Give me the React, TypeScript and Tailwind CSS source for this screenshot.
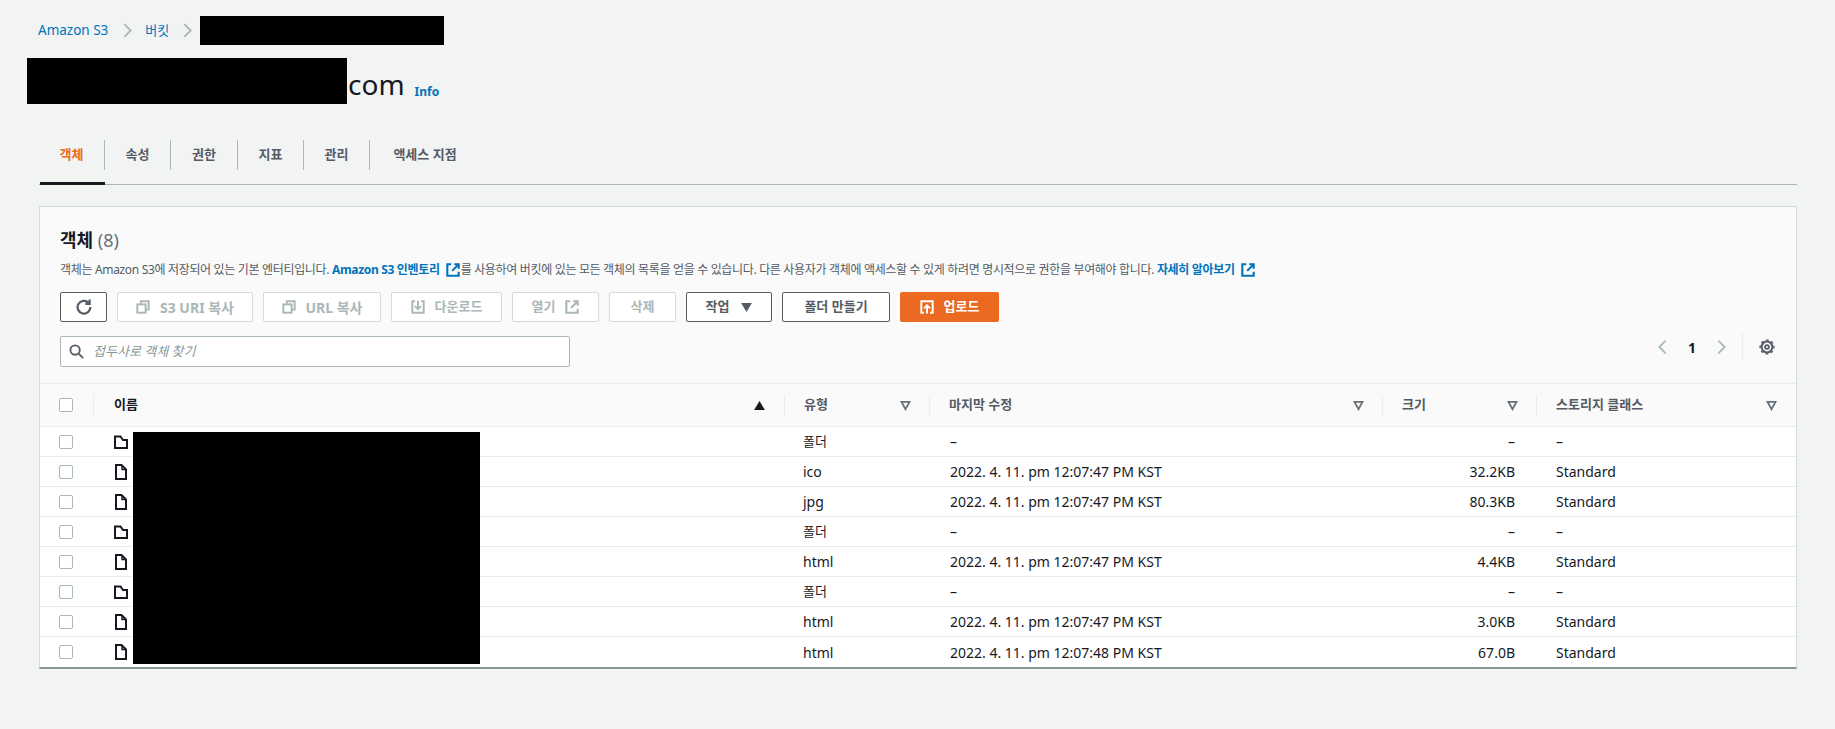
import React from 'react'

const FONT = "font-['Noto_Sans','Noto_Sans_CJK_KR',sans-serif]"

function ExternalIcon({ className = '' }: { className?: string }) {
  return (
    <svg viewBox="0 0 16 16" className={className} fill="none" stroke="currentColor" strokeWidth="2.4">
      <path d="M6 1.5H1.5v13h13V10" />
      <path d="M9.5 1.5h5V6.5" />
      <path d="M14.5 1.5 7 9" />
    </svg>
  )
}

function CopyIcon() {
  return (
    <svg viewBox="0 0 16 16" className="w-[14px] h-[14px]" fill="none" stroke="currentColor" strokeWidth="2.2">
      <path d="M5.5 5V1.5h9V11H11" />
      <rect x="1.5" y="5" width="9.5" height="9.5" />
    </svg>
  )
}

function DownloadIcon() {
  return (
    <svg viewBox="0 0 16 16" className="w-[14px] h-[14px]" fill="none" stroke="currentColor" strokeWidth="2.2">
      <path d="M4.5 1.5h-3v13h13v-13h-3" />
      <path d="M8 1v9" />
      <path d="M4.5 7 8 10.5 11.5 7" />
    </svg>
  )
}

function UploadIcon() {
  return (
    <svg viewBox="0 0 16 16" className="w-[14px] h-[14px]" fill="none" stroke="currentColor" strokeWidth="2.2">
      <path d="M4.5 14.5h-3v-13h13v13h-3" />
      <path d="M8 15.5V6" />
      <path d="M4.5 9.5 8 6l3.5 3.5" />
    </svg>
  )
}

function RefreshIcon() {
  return (
    <svg viewBox="0 0 16 16" className="w-4 h-4" fill="none" stroke="currentColor" strokeWidth="2.2">
      <path d="M12.6 3.8A6.4 6.4 0 1 0 14.4 8" />
      <path d="M13.6 0.5v4.3H9.3" />
    </svg>
  )
}

function FolderIcon() {
  return (
    <svg viewBox="0 0 14 14" className="w-[14px] h-[14px] text-[#16191f]" fill="none" stroke="currentColor" strokeWidth="2">
      <path d="M1 13V1.5h5.5L9 5h4v8Z" />
    </svg>
  )
}

function FileIcon() {
  return (
    <svg viewBox="0 0 14 16" className="w-[14px] h-4 text-[#16191f]" fill="none" stroke="currentColor" strokeWidth="2">
      <path d="M2 15V1h5.5L12 5.5V15Z" />
      <path d="M8 1v4.5h4" strokeWidth="1.4" />
    </svg>
  )
}

function SortIcon() {
  return (
    <svg viewBox="0 0 12 12" className="w-[11px] h-[11px] text-[#687078]" fill="none" stroke="currentColor" strokeWidth="2">
      <path d="M1.6 2h8.8L6 10Z" />
    </svg>
  )
}

function Chevron({ dir, className = '' }: { dir: 'left' | 'right'; className?: string }) {
  return (
    <svg viewBox="0 0 10 16" className={className} fill="none" stroke="currentColor" strokeWidth="2">
      <path d={dir === 'right' ? 'M1.5 1 8.5 8l-7 7' : 'M8.5 1 1.5 8l7 7'} />
    </svg>
  )
}

function GearIcon() {
  return (
    <svg viewBox="0 0 16 16" className="w-4 h-4 text-[#545b64]" fill="none" stroke="currentColor">
      <circle cx="8" cy="8" r="5.4" strokeWidth="2" />
      <circle cx="8" cy="8" r="6.9" strokeWidth="1.4" strokeDasharray="2.8 2.62" strokeDashoffset="1.4" />
      <circle cx="8" cy="8" r="1.9" strokeWidth="1.8" />
    </svg>
  )
}

function DisabledButton({ width, children }: { width: string; children: React.ReactNode }) {
  return (
    <div className={`${width} h-[30px] flex items-center justify-center gap-[10px] border border-[#d5dbdb] rounded-[2px] bg-white text-[#aab7b8] text-[13px] font-bold`}>
      {children}
    </div>
  )
}

function Checkbox() {
  return <div className="w-[14px] h-[14px] border border-[#aab7b8] rounded-[2px] bg-white" />
}

const TABS = [
  { label: '객체', width: 'w-[66px]' },
  { label: '속성', width: 'w-[66px]' },
  { label: '권한', width: 'w-[67px]' },
  { label: '지표', width: 'w-[66px]' },
  { label: '관리', width: 'w-[66px]' },
  { label: '액세스 지점', width: 'w-[110px]' },
]
const COLS = 'grid grid-cols-[53px_691px_145px_453px_154px_1fr]'

const ROWS = [
  { folder: true, type: '폴더', date: '–', size: '–', cls: '–' },
  { folder: false, type: 'ico', date: '2022. 4. 11. pm 12:07:47 PM KST', size: '32.2KB', cls: 'Standard' },
  { folder: false, type: 'jpg', date: '2022. 4. 11. pm 12:07:47 PM KST', size: '80.3KB', cls: 'Standard' },
  { folder: true, type: '폴더', date: '–', size: '–', cls: '–' },
  { folder: false, type: 'html', date: '2022. 4. 11. pm 12:07:47 PM KST', size: '4.4KB', cls: 'Standard' },
  { folder: true, type: '폴더', date: '–', size: '–', cls: '–' },
  { folder: false, type: 'html', date: '2022. 4. 11. pm 12:07:47 PM KST', size: '3.0KB', cls: 'Standard' },
  { folder: false, type: 'html', date: '2022. 4. 11. pm 12:07:48 PM KST', size: '67.0B', cls: 'Standard' },
]

function HeaderCell({ label, last = false }: { label: string; last?: boolean }) {
  return (
    <div className="h-full flex items-center">
      <div className={`flex-1 h-[21px] flex items-center justify-between pl-[19px] ${last ? 'pr-[19px]' : 'pr-[18px]'} border-l border-[#eaeded]`}>
        <span className="text-[13px] font-bold text-[#545b64]">{label}</span>
        <SortIcon />
      </div>
    </div>
  )
}

export default function App() {
  return (
    <div className={`${FONT} min-h-screen bg-[#f2f3f3] pt-[16px] pl-[39px] pr-[38px] text-[#16191f]`}>
      {/* 브레드크럼 */}
      <div className="flex items-center h-[29px] -ml-[1px] text-[#0073bb]">
        <span className="text-[13.5px]">Amazon S3</span>
        <Chevron dir="right" className="w-[9px] h-[15px] ml-[15px] mr-[13px] text-[#aab7b8]" />
        <span className="text-[13px]">버킷</span>
        <Chevron dir="right" className="w-[9px] h-[15px] ml-[14px] mr-[8px] text-[#aab7b8]" />
        <div className="w-[244px] h-[29px] bg-black" />
      </div>

      {/* 제목 */}
      <div className="flex items-end h-[46px] mt-[13px] -ml-[12px]">
        <div className="w-[320px] h-[46px] bg-black" />
        <span className="text-[28px] leading-[38px] ml-[1px] mb-[1px]">com</span>
        <span className="ml-[10px] mb-[3px] text-[12px] font-bold text-[#0073bb]">Info</span>
      </div>

      {/* 탭 */}
      <div className="flex h-[45px] mt-[36px] border-b border-[#aab7b8]">
        {TABS.map((tab, i) => (
          <div key={tab.label} className={`relative h-[44px] ${tab.width}`}>
            <div className={`h-[30px] flex items-center justify-center whitespace-nowrap text-[13px] font-bold ${i < TABS.length - 1 ? 'border-r border-[#aab7b8]' : ''} ${i === 0 ? 'text-[#eb6920]' : 'text-[#545b64]'}`}>
              {tab.label}
            </div>
            {i === 0 && <div className="absolute bottom-[-1px] left-[1px] right-0 h-[3px] bg-[#16191f]" />}
          </div>
        ))}
      </div>

      {/* 객체 카드 */}
      <div className="mt-[21px] bg-[#fafafa] border-l border-t border-r border-[#d5dbdb] border-b-2 border-b-[#879596]">
        <div className="pl-[20px] pr-[20px] h-[176px]">
          <div className="pt-[20px] text-[18px] leading-[26px] font-bold">
            객체 <span className="font-normal text-[#687078]">(8)</span>
          </div>
          <div className="mt-[8px] flex items-center h-[18px] text-[12px] tracking-[-0.33px] text-[#545b64] whitespace-nowrap">
            <span>객체는 Amazon S3에 저장되어 있는 기본 엔터티입니다.&nbsp;</span>
            <span className="font-bold text-[#0073bb]">Amazon S3 인벤토리</span>
            <ExternalIcon className="w-[14px] h-[14px] ml-[6px] mr-[1px] text-[#0073bb]" />
            <span>를 사용하여 버킷에 있는 모든 객체의 목록을 얻을 수 있습니다. 다른 사용자가 객체에 액세스할 수 있게 하려면 명시적으로 권한을 부여해야 합니다.&nbsp;</span>
            <span className="font-bold text-[#0073bb]">자세히 알아보기</span>
            <ExternalIcon className="w-[14px] h-[14px] ml-[6px] text-[#0073bb]" />
          </div>
          <div className="mt-[13px] flex gap-[10px]">
            <div className="w-[47px] h-[30px] flex items-center justify-center border border-[#545b64] rounded-[2px] bg-white text-[#545b64]">
              <RefreshIcon />
            </div>
            <DisabledButton width="w-[136px]"><CopyIcon /><span className="text-[14px]">S3 URI 복사</span></DisabledButton>
            <DisabledButton width="w-[118px]"><CopyIcon /><span className="text-[14px]">URL 복사</span></DisabledButton>
            <DisabledButton width="w-[111px]"><DownloadIcon />다운로드</DisabledButton>
            <DisabledButton width="w-[87px]">열기<ExternalIcon className="w-[14px] h-[14px]" /></DisabledButton>
            <DisabledButton width="w-[67px]">삭제</DisabledButton>
            <div className="w-[86px] h-[30px] flex items-center justify-center gap-[12px] border border-[#545b64] rounded-[2px] bg-white text-[#545b64] text-[13px] font-bold">
              작업
              <svg viewBox="0 0 12 10" className="w-[11px] h-[9px]"><path d="M0 0h12L6 10Z" fill="currentColor" /></svg>
            </div>
            <div className="w-[108px] h-[30px] flex items-center justify-center border border-[#545b64] rounded-[2px] bg-white text-[#545b64] text-[13px] font-bold">
              폴더 만들기
            </div>
            <div className="w-[99px] h-[30px] flex items-center justify-center gap-[10px] rounded-[2px] bg-[#eb6920] text-white text-[13px] font-bold">
              <UploadIcon />업로드
            </div>
          </div>
          <div className="mt-[14px] flex items-start justify-between">
            <div className="w-[510px] h-[31px] flex items-center gap-[9px] pl-[8px] border border-[#aab7b8] rounded-[2px] bg-white">
              <svg viewBox="0 0 16 16" className="w-[15px] h-[15px] text-[#545b64]" fill="none" stroke="currentColor" strokeWidth="2">
                <circle cx="6.5" cy="6.5" r="5" />
                <path d="m10.5 10.5 4.5 4.5" />
              </svg>
              <span className="text-[13px] italic text-[#879596]">접두사로 객체 찾기</span>
            </div>
            <div className="flex items-center h-[30px] -mt-[4px] mr-[1px]">
              <Chevron dir="left" className="w-[9px] h-[16px] text-[#aab7b8]" />
              <span className="mx-[21px] text-[14px] font-bold">1</span>
              <Chevron dir="right" className="w-[9px] h-[16px] text-[#aab7b8]" />
              <div className="w-px h-[30px] bg-[#eaeded] ml-[16px] mr-[16px]" />
              <GearIcon />
            </div>
          </div>
        </div>

        {/* 테이블 헤더 */}
        <div className={`${COLS} h-[44px] bg-[#fafafa] border-t border-b border-[#eaeded]`}>
          <div className="h-full flex items-center pl-[19px]"><Checkbox /></div>
          <div className="h-full flex items-center">
            <div className="flex-1 h-[21px] flex items-center justify-between pl-[20px] pr-[19px] border-l border-[#eaeded]">
              <span className="text-[13px] font-bold text-[#16191f]">이름</span>
              <svg viewBox="0 0 12 10" className="w-[11px] h-[9px] text-[#16191f]"><path d="M6 0l6 10H0Z" fill="currentColor" /></svg>
            </div>
          </div>
          <HeaderCell label="유형" />
          <HeaderCell label="마지막 수정" />
          <HeaderCell label="크기" />
          <HeaderCell label="스토리지 클래스" last />
        </div>

        {/* 테이블 본문 */}
        <div className="relative bg-white">
          {ROWS.map((row, i) => (
            <div key={i} className={`${COLS} h-[30px] items-center text-[14px] ${i < ROWS.length - 1 ? 'border-b border-[#eaeded]' : ''}`}>
              <div className="pl-[19px]"><Checkbox /></div>
              <div className="pl-[21px]">{row.folder ? <FolderIcon /> : <FileIcon />}</div>
              <div className={`pl-[19px] ${row.folder ? 'text-[13px]' : ''}`}>{row.type}</div>
              <div className="pl-[21px]">{row.date}</div>
              <div className="pr-[21px] text-right">{row.size}</div>
              <div className="pl-[20px]">{row.cls}</div>
            </div>
          ))}
          {/* 가림 영역 */}
          <div className="absolute top-[5px] left-[93px] w-[347px] h-[232px] bg-black" />
        </div>
      </div>
    </div>
  )
}
